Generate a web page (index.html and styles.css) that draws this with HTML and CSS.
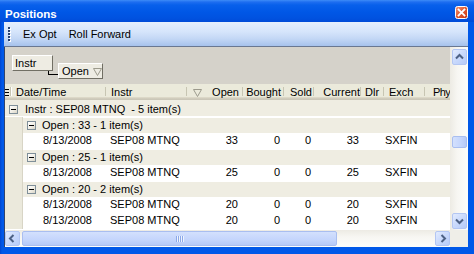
FILE: index.html
```html
<!DOCTYPE html>
<html>
<head>
<meta charset="utf-8">
<title>Positions</title>
<link rel="stylesheet" href="styles.css">
</head>
<body>
<div class="window">
  <div class="titlebar">
    <span class="title">Positions</span>
    <span class="close">
      <svg width="13" height="13" viewBox="0 0 13 13">
        <defs>
          <linearGradient id="cg" x1="0" y1="0" x2="1" y2="1">
            <stop offset="0" stop-color="#F29A7C"/>
            <stop offset="0.5" stop-color="#E0582F"/>
            <stop offset="1" stop-color="#C63A18"/>
          </linearGradient>
        </defs>
        <rect x="0.5" y="0.5" width="12" height="12" rx="2" fill="url(#cg)" stroke="#FFFFFF"/>
        <path d="M3.6 3.6 L9.4 9.4 M9.4 3.6 L3.6 9.4" stroke="#FFFFFF" stroke-width="1.9" stroke-linecap="square"/>
      </svg>
    </span>
  </div>
  <div class="frame">
    <div class="client">
      <div class="toolbar">
        <span class="tb-grip"><i></i><i></i><i></i><i></i><i></i></span>
        <span class="tb-item">Ex Opt</span>
        <span class="tb-item">Roll Forward</span>
      </div>
      <div class="body">
        <div class="grid">
          <div class="groupby">
            <div class="gb-btn gb-instr">Instr</div>
            <div class="gb-link"></div>
            <div class="gb-btn gb-open">Open<svg class="tri" width="9" height="8" viewBox="0 0 9 8"><path d="M0.5 0.5 H8.5 L4.5 7.5 Z" fill="none" stroke="#9C9A8C"/></svg></div>
          </div>
          <div class="header">
            <span class="hgrip"><svg width="4" height="16" viewBox="0 0 4 16"><rect x="0" y="5" width="4" height="1" fill="#000"/><rect x="0" y="8" width="4" height="1" fill="#000"/><rect x="0" y="11" width="4" height="1" fill="#000"/></svg></span>
            <span class="hc w-date">Date/Time</span>
            <span class="hc w-instr">Instr</span>
            <span class="hc w-open"><svg class="tri" width="9" height="8" viewBox="0 0 9 8"><path d="M0.5 0.5 H8.5 L4.5 7.5 Z" fill="none" stroke="#9C9A8C"/></svg><span>Open</span></span>
            <span class="hc w-bought r">Bought</span>
            <span class="hc w-sold r">Sold</span>
            <span class="hc w-current r">Current</span>
            <span class="hc w-dlr">Dlr</span>
            <span class="hc w-exch">Exch</span>
            <span class="hc w-phy">Phy</span>
          </div>
          <div class="rows">
            <div class="row g1"><span class="exp"></span><span class="gtext">Instr : SEP08 MTNQ  - 5 item(s)</span></div>
            <div class="row g2"><span class="indent"></span><span class="gcell"><span class="exp"></span><span class="gtext">Open : 33 - 1 item(s)</span></span></div>
            <div class="row d"><span class="indent"></span><span class="c w-ddate">8/13/2008</span><span class="c w-dinstr">SEP08 MTNQ</span><span class="c w-dopen">33</span><span class="c w-dbought">0</span><span class="c w-dsold">0</span><span class="c w-dcurrent">33</span><span class="c w-ddlr"></span><span class="c w-dexch">SXFIN</span><span class="c w-dphy"></span></div>
            <div class="row g2"><span class="indent"></span><span class="gcell"><span class="exp"></span><span class="gtext">Open : 25 - 1 item(s)</span></span></div>
            <div class="row d"><span class="indent"></span><span class="c w-ddate">8/13/2008</span><span class="c w-dinstr">SEP08 MTNQ</span><span class="c w-dopen">25</span><span class="c w-dbought">0</span><span class="c w-dsold">0</span><span class="c w-dcurrent">25</span><span class="c w-ddlr"></span><span class="c w-dexch">SXFIN</span><span class="c w-dphy"></span></div>
            <div class="row g2"><span class="indent"></span><span class="gcell"><span class="exp"></span><span class="gtext">Open : 20 - 2 item(s)</span></span></div>
            <div class="row d"><span class="indent"></span><span class="c w-ddate">8/13/2008</span><span class="c w-dinstr">SEP08 MTNQ</span><span class="c w-dopen">20</span><span class="c w-dbought">0</span><span class="c w-dsold">0</span><span class="c w-dcurrent">20</span><span class="c w-ddlr"></span><span class="c w-dexch">SXFIN</span><span class="c w-dphy"></span></div>
            <div class="row d"><span class="indent"></span><span class="c w-ddate">8/13/2008</span><span class="c w-dinstr">SEP08 MTNQ</span><span class="c w-dopen">20</span><span class="c w-dbought">0</span><span class="c w-dsold">0</span><span class="c w-dcurrent">20</span><span class="c w-ddlr"></span><span class="c w-dexch">SXFIN</span><span class="c w-dphy"></span></div>
          </div>
        </div>
        <div class="vscroll">
          <span class="sbtn vbtn"><svg width="13" height="14" viewBox="0 0 13 14"><path d="M3 8.5 L6.5 5 L10 8.5" fill="none" stroke="#4D6185" stroke-width="2"/></svg></span>
          <span class="vthumb"></span>
          <span class="vfill"></span>
          <span class="sbtn vbtn"><svg width="13" height="14" viewBox="0 0 13 14"><path d="M3 5.5 L6.5 9 L10 5.5" fill="none" stroke="#4D6185" stroke-width="2"/></svg></span>
        </div>
      </div>
      <div class="hrow">
        <div class="hscroll">
          <span class="sbtn hbtn"><svg width="13" height="13" viewBox="0 0 13 13"><path d="M7.5 3 L4 6.5 L7.5 10" fill="none" stroke="#4D6185" stroke-width="2"/></svg></span>
          <span class="hthumb"><span class="hgripl"><i></i><i></i><i></i><i></i></span></span>
          <span class="hfill"></span>
          <span class="sbtn hbtn"><svg width="13" height="13" viewBox="0 0 13 13"><path d="M5.5 3 L9 6.5 L5.5 10" fill="none" stroke="#4D6185" stroke-width="2"/></svg></span>
        </div>
        <div class="corner"></div>
      </div>
    </div>
  </div>
</div>
</body>
</html>
```

FILE: styles.css
```css
* { box-sizing: border-box; }
html, body { margin: 0; padding: 0; }
body {
  width: 474px;
  height: 254px;
  overflow: hidden;
  font-family: "Liberation Sans", Arial, sans-serif;
  font-size: 11px;
  line-height: 13px;
  color: #000;
  background: #fff;
}
.window {
  width: 474px;
  height: 254px;
  display: flex;
  flex-direction: column;
  background: #0055E5;
}
.titlebar {
  height: 22px;
  flex: none;
  display: flex;
  align-items: flex-start;
  padding: 0 6px 0 5px;
  background: linear-gradient(to bottom, #3D8CF7 0, #1E6EF0 2px, #0860EB 5px, #0057E6 12px, #0052E0 18px, #004BD8 22px);
}
.title {
  color: #fff;
  font-weight: bold;
  font-size: 11.5px;
  padding-top: 8px;
  flex: 1;
}
.close {
  margin-top: 6px;
  width: 13px;
  height: 13px;
  display: flex;
}
.frame {
  flex: 1;
  display: flex;
  flex-direction: column;
  padding: 0 6px 7px 4px;
  background: linear-gradient(to right, #0044D0 0, #0058E8 2px, #0058E8 100%);
}
.client {
  flex: 1;
  display: flex;
  flex-direction: column;
  background: #fff;
}
.toolbar {
  height: 25px;
  flex: none;
  display: flex;
  align-items: flex-start;
  padding: 6px 0 0 4px;
  background: linear-gradient(to bottom, #E5EFFD 0, #D6E5FB 40%, #C3D7F5 70%, #A6C2EC 100%);
  border-bottom: 1px solid #6A7891;
  border-top-right-radius: 3px;
}
.tb-grip {
  display: flex;
  flex-direction: column;
  gap: 1px;
  margin-top: -1px;
  width: 4px;
}
.tb-grip i {
  display: block;
  width: 2px;
  height: 2px;
  background: #27416F;
  box-shadow: 1px 1px 0 #FFFFFF;
}
.tb-item {
  margin-left: 11px;
  margin-right: 1px;
}
.body {
  height: 183px;
  flex: none;
  display: flex;
  border-left: 1px solid #30446E;
}
.grid {
  width: 445px;
  display: flex;
  flex-direction: column;
  background: #fff;
}
.groupby {
  height: 37px;
  flex: none;
  background: #D5D2CA;
  display: flex;
  align-items: flex-start;
  padding: 8px 0 0 7px;
}
.gb-btn {
  height: 16px;
  background: #EEECE3;
  border-top: 1px solid #FFFFFF;
  border-left: 1px solid #FFFFFF;
  border-right: 1px solid #716F64;
  border-bottom: 1px solid #716F64;
  padding: 1px 0 0 2px;
  display: flex;
  align-items: flex-start;
}
.gb-instr { width: 41px; }
.gb-link {
  width: 10px;
  height: 4px;
  margin: 16px 0 0 -5px;
  border-left: 1px solid #000;
  border-bottom: 1px solid #000;
}
.gb-open {
  width: 45px;
  margin-top: 8px;
  padding-left: 3px;
}
.gb-open .tri { margin: 3px 0 0 4px; }
.header {
  height: 16px;
  flex: none;
  display: flex;
  overflow: hidden;
  background: linear-gradient(to bottom, #EBEADB 0, #EBEADB 13px, #E2DECD 13px, #D6D2C2 14px, #CBC7B8 15px, #CBC7B8 16px);
}
.hgrip {
  width: 6px;
  flex: none;
  padding-left: 0;
  position: relative;
}
.hgrip::after, .hc::after {
  content: "";
  position: absolute;
  right: 0;
  top: 3px;
  bottom: 4px;
  width: 1px;
  background: #C7C5B2;
  box-shadow: 1px 0 0 #FFFFFF;
}
.hc {
  flex: none;
  position: relative;
  padding-top: 2px;
  white-space: nowrap;
  overflow: hidden;
}
.hc.r { text-align: right; }
.w-date { width: 95px; padding-left: 5px; }
.w-instr { width: 81px; padding-left: 5px; }
.w-open {
  width: 56px;
  display: flex;
  justify-content: space-between;
  align-items: flex-start;
  padding-left: 6px;
  padding-right: 4px;
}
.w-open .tri { margin-top: 3px; }
.w-bought { width: 41px; padding-right: 3px; }
.w-sold { width: 30px; padding-right: 2px; }
.w-current { width: 47px; padding-right: 1px; }
.w-dlr { width: 23px; padding-left: 4px; }
.w-exch { width: 41px; padding-left: 5px; }
.w-phy { width: 25px; padding-left: 8px; letter-spacing: -0.6px; }
.hc.w-phy::after { display: none; }
.rows {
  flex: 1;
  display: flex;
  flex-direction: column;
  background: #fff;
}
.row {
  height: 16px;
  flex: none;
  display: flex;
  align-items: flex-start;
  white-space: pre;
}
.g1 {
  height: 17px;
  background: #EFEDE2;
  padding: 3px 0 0 4px;
  border-bottom: 1px solid #FFFFFF;
}
.exp {
  width: 9px;
  height: 9px;
  flex: none;
  margin-top: 2px;
  border: 1px solid #7F8F99;
  background: linear-gradient(135deg, #FFFFFF 0, #F2F0E8 50%, #D9D5C6 100%);
  position: relative;
}
.exp::after {
  content: "";
  position: absolute;
  left: 1px;
  top: 3px;
  width: 5px;
  height: 1px;
  background: #000;
}
.gtext { margin-left: 7px; }
.indent {
  width: 18px;
  flex: none;
  align-self: stretch;
  background: #EBE9DC;
  border-right: 1px solid #D8D5C6;
}
.g2 { background: #EFEDE2; }
.gcell {
  flex: 1;
  display: flex;
  align-items: flex-start;
  align-self: stretch;
  border-top: 1px solid #FFFFFF;
  padding: 1px 0 0 4px;
}
.g2 .gtext { margin-left: 6px; }
.d { background: #FFFFFF; }
.c {
  flex: none;
  padding-top: 1px;
}
.w-ddate { width: 83px; padding-left: 20px; }
.w-dinstr { width: 81px; padding-left: 4px; }
.w-dopen { width: 56px; text-align: right; padding-right: 5px; }
.w-dbought { width: 41px; text-align: right; padding-right: 4px; }
.w-dsold { width: 30px; text-align: right; padding-right: 3px; }
.w-dcurrent { width: 47px; text-align: right; padding-right: 2px; }
.w-ddlr { width: 23px; }
.w-dexch { width: 41px; padding-left: 1px; }
.w-dphy { flex: 1; }
.vscroll {
  width: 18px;
  flex: none;
  display: flex;
  flex-direction: column;
  padding: 2px 1px 1px 2px;
  background: linear-gradient(to right, #EDEBE4 0, #F7F6F2 40%, #FDFDFB 100%);
}
.sbtn {
  flex: none;
  display: flex;
  align-items: center;
  justify-content: center;
  border: 1px solid #B3C6F3;
  border-radius: 2px;
  background: linear-gradient(135deg, #E2EBFE 0, #C9D9FC 50%, #B7CBF8 100%);
}
.vbtn { width: 15px; height: 16px; }
.vthumb {
  flex: none;
  width: 15px;
  height: 12px;
  margin-top: 71px;
  border: 1px solid #A9BEF0;
  border-radius: 2px;
  background: linear-gradient(to right, #D3E0FD 0, #C4D5FC 60%, #B6C9F7 100%);
}
.vfill { flex: 1; }
.hrow {
  height: 17px;
  flex: none;
  display: flex;
  border-left: 1px solid #30446E;
}
.hscroll {
  width: 445px;
  display: flex;
  align-items: flex-start;
  padding-top: 1px;
  background: linear-gradient(to bottom, #EDEBE4 0, #F7F6F2 40%, #FDFDFB 100%);
}
.hbtn { width: 15px; height: 15px; }
.hthumb {
  flex: none;
  width: 315px;
  height: 15px;
  margin-left: 2px;
  border: 1px solid #A9BEF0;
  border-radius: 2px;
  background: linear-gradient(to bottom, #D3E0FD 0, #C4D5FC 60%, #B6C9F7 100%);
  display: flex;
  justify-content: center;
  align-items: center;
}
.hgripl {
  display: flex;
  gap: 1px;
}
.hgripl i {
  display: block;
  width: 1px;
  height: 6px;
  background: #8CA8E8;
  box-shadow: 1px 0 0 #EEF4FE;
}
.hfill { flex: 1; }
.corner {
  width: 18px;
  flex: none;
  background: #EFEEE8;
}
```
